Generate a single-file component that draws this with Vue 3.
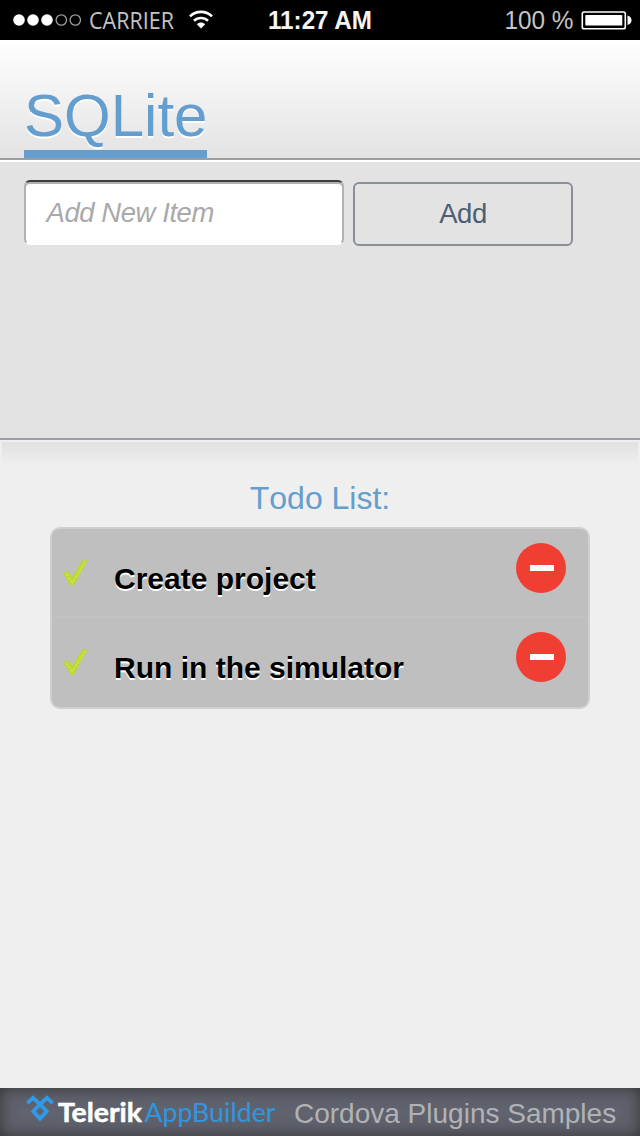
<script setup>
import { ref } from 'vue'

const draft = ref('')
const items = ref([
  { id: 1, text: 'Create project' },
  { id: 2, text: 'Run in the simulator' },
])

function addItem() {
  if (!draft.value) return
  items.value.push({ id: Date.now(), text: draft.value })
  draft.value = ''
}

function removeItem(id) {
  items.value = items.value.filter((item) => item.id !== id)
}
</script>

<template>
  <div class="screen">
    <div class="status">
      <svg width="640" height="40" viewBox="0 0 640 40">
        <g fill="#fff">
          <circle cx="19" cy="20" r="5.8" />
          <circle cx="33" cy="20" r="5.8" />
          <circle cx="47" cy="20" r="5.8" />
        </g>
        <g fill="none" stroke="#a0a0a0" stroke-width="1.3">
          <circle cx="61.3" cy="20" r="5.2" />
          <circle cx="75.3" cy="20" r="5.2" />
        </g>
        <text class="carrier" x="89" y="29" textLength="85" lengthAdjust="spacingAndGlyphs">CARRIER</text>
        <g fill="none" stroke="#fff" stroke-width="2.6">
          <path d="M190 16.4C196 10.4 206 10.4 212 16.4" />
          <path d="M194 20.8C198 17 204 17 208 20.8" />
        </g>
        <path d="M196.8 24.2C199.3 22 202.700 22 205.200 24.200L201 28.400Z" fill="#fff" />
        <text class="clock" x="268" y="29" textLength="104" lengthAdjust="spacingAndGlyphs">11:27 AM</text>
        <text class="percent" x="504.5" y="29" textLength="69" lengthAdjust="spacingAndGlyphs">100 %</text>
        <rect x="582.3" y="12" width="43" height="16.7" rx="1.8" fill="none" stroke="#fff" stroke-width="1.6" />
        <rect x="585.3" y="15" width="37" height="10.5" rx=".8" fill="#fff" />
        <path d="M627.5 15.5Q631.5 16.5 631.5 20.3Q631.5 24 627.5 25Z" fill="#fff" />
      </svg>
    </div>

    <header class="header">
      <h1>SQLite</h1>
    </header>

    <form class="form" @submit.prevent="addItem">
      <input v-model="draft" type="text" placeholder="Add New Item">
      <button type="submit">Add</button>
    </form>

    <main class="content">
      <h2>Todo List:</h2>
      <ul>
        <li v-for="item in items" :key="item.id">
          <svg class="check" width="26" height="28" viewBox="0 0 26 28">
            <path d="M.3 14.300L5 12L9.500 18.200L18.800 2L24.800 1L10.800 26.500L8 27.300Z" fill="#bcd833" />
            <path d="M3.500 15L9.300 23.500L22 3.500" fill="none" stroke="#d0ea42" stroke-width="1.500" stroke-dasharray="2.500 1.500" />
          </svg>
          <span>{{ item.text }}</span>
          <button type="button" class="remove" aria-label="Remove" @click="removeItem(item.id)">
            <i></i>
          </button>
        </li>
      </ul>
    </main>

    <footer class="footer">
      <svg class="brand" width="264" height="48" viewBox="0 0 264 48">
        <path class="mark" d="M1.4 15.2L7 9.800L14 16.300L20.700 23.500L14 30.800L7.300 23.500L14 16.300L21 9.800L26.600 15.200" />
        <text class="telerik" x="32" y="33.500" textLength="84" lengthAdjust="spacingAndGlyphs">Telerik</text>
        <text class="builder" x="118.500" y="33.500" textLength="131" lengthAdjust="spacingAndGlyphs">AppBuilder</text>
      </svg>
      <span>Cordova Plugins Samples</span>
    </footer>
  </div>
</template>

<style>
body {
  background: #efefef;
}
</style>

<style scoped>
.screen {
  display: flex;
  flex-direction: column;
  width: 640px;
  height: 1136px;
  overflow: hidden;
  background: #efefef;
  font-family: "Liberation Sans", Arial, sans-serif;
}

.screen * {
  box-sizing: border-box;
}

.status {
  height: 40px;
  background: #000;
}

.status svg {
  display: block;
}

.carrier {
  font: 23px "Open Sans", sans-serif;
  fill: #c4c4c4;
}

.clock {
  font: bold 25.5px "Liberation Sans", sans-serif;
  fill: #f4f4f4;
}

.percent {
  font: 25px "Liberation Sans", sans-serif;
  fill: #c4c4c4;
}

.header {
  display: flex;
  align-items: flex-end;
  height: 120px;
  padding-left: 24px;
  border-bottom: 2px solid #9b9fa1;
  background: linear-gradient(#fff, #e3e3e3);
}

h1 {
  margin: 0;
  height: 76px;
  border-bottom: 8px solid #639ece;
  color: #639ece;
  font-size: 60px;
  font-weight: normal;
  line-height: 67px;
  text-shadow: 0 2px 0 #fff;
}

.form {
  display: flex;
  align-items: flex-start;
  gap: 9px;
  height: 280px;
  padding: 18px 24px 0;
  border-top: 2px solid #fff;
  border-bottom: 2px solid #9b9fa3;
  background: #e3e3e3;
}

.form input {
  width: 320px;
  height: 65px;
  margin: 0;
  padding: 1px 20px 0 18px;
  border: 2px solid #b2b2b2;
  border-top-color: #3a3d3c;
  border-bottom-color: #fff;
  border-radius: 6px;
  outline: none;
  background: #fff;
  box-shadow: inset 0 2px 0 #b0b2b1;
  font: 27.5px "Liberation Sans", Arial, sans-serif;
  letter-spacing: -0.44px;
  text-indent: 2.500px;
}

.form input::placeholder {
  color: #a9a9a9;
  font-style: italic;
}

.form > button {
  width: 220px;
  height: 64px;
  margin: 2px 0 0;
  padding: 0;
  border: 2px solid #8b8f98;
  border-radius: 6px;
  background: transparent;
  color: #4c5e70;
  font: 27.5px "Liberation Sans", Arial, sans-serif;
  letter-spacing: -0.5px;
}

.content {
  flex: 1;
  margin: 2px 2px 0;
  padding: 38px 48px 0;
  background: linear-gradient(#e1e1e1, #efefef 24px);
}

h2 {
  margin: 0 0 11px;
  color: #639ece;
  font-size: 32px;
  font-weight: normal;
  font-kerning: none;
  line-height: 36px;
  text-align: center;
}

ul {
  margin: 0;
  padding: 0;
  border: 2px solid #d0d0d0;
  border-radius: 10px;
  background: #bfbfbf;
  list-style: none;
}

li {
  display: flex;
  align-items: flex-start;
  height: 87px;
  padding: 14px 22px 0 11px;
}

li + li {
  height: 91px;
  padding-top: 16px;
  background: linear-gradient(#c3c3c3, #c3c3c3) 2px 0 / 532px 2px no-repeat;
}

.check {
  flex: none;
  margin-top: 16px;
}

li span {
  flex: 1;
  margin: 19px 0 0 25px;
  color: #000;
  font-size: 30px;
  font-weight: bold;
  line-height: 34px;
  text-shadow: 0 2px 0 #fff;
}

.remove {
  display: flex;
  align-items: center;
  justify-content: center;
  width: 50px;
  height: 50px;
  margin: 0;
  padding: 0 0 0 2px;
  border: 0;
  border-radius: 50%;
  background: #f03e33;
}

.remove i {
  width: 24px;
  height: 6px;
  background: #fff;
}

.footer {
  display: flex;
  height: 48px;
  padding-left: 26px;
  background: #60636d;
  box-shadow: inset 0 0 16px #333;
  color: #b1b2b6;
  font-size: 28px;
  line-height: 51px;
}

.footer span {
  margin-left: 4px;
  white-space: nowrap;
}

.brand {
  flex: none;
}

.mark {
  fill: none;
  stroke: #2f9ae8;
  stroke-width: 3.8;
}

.telerik {
  font: bold 26.5px Lato, "Open Sans", sans-serif;
  fill: #fff;
  stroke: #fff;
  stroke-width: .5;
}

.builder {
  font: 26.5px Lato, "Open Sans", sans-serif;
  fill: #3196df;
}
</style>
